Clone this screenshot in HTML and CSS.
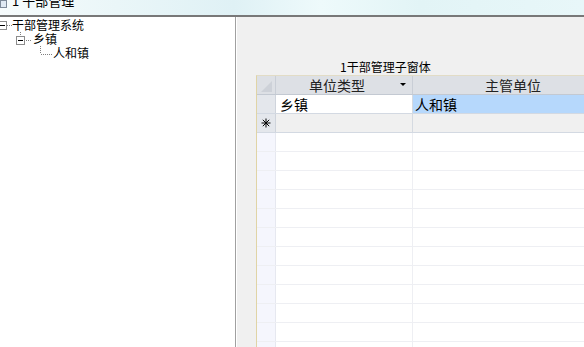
FILE: index.html
```html
<!DOCTYPE html>
<html lang="zh-CN">
<head>
    <meta charset="UTF-8">
    <meta name="viewport" content="width=device-width, initial-scale=1.0">
    <title>1 干部管理</title>
    <link rel="stylesheet" href="styles.css">
</head>
<body>

    <div class="titlebar">
        <span class="app-icon"></span>
        <span class="title">1 干部管理</span>
    </div>

    <div class="main">
        <!-- 左侧树 -->
        <div class="tree">
            <div class="node">
                <svg width="12" height="14">
                    <rect x="-1.5" y="3.5" width="8" height="8" fill="#fff" stroke="#8c8c8c"/>
                    <line x1="0" y1="7.5" x2="5" y2="7.5" stroke="#000"/>
                    <line x1="7" y1="7.5" x2="12" y2="7.5" stroke="#808080" stroke-dasharray="1 1"/>
                </svg>
                <span>干部管理系统</span>
            </div>
            <div class="node">
                <svg width="33" height="14">
                    <line x1="20.5" y1="0" x2="20.5" y2="4" stroke="#808080" stroke-dasharray="1 1"/>
                    <rect x="16.5" y="4.5" width="8" height="8" fill="#fff" stroke="#8c8c8c"/>
                    <line x1="18" y1="8.5" x2="23" y2="8.5" stroke="#000"/>
                    <line x1="26" y1="8.5" x2="32" y2="8.5" stroke="#808080" stroke-dasharray="1 1"/>
                </svg>
                <span>乡镇</span>
            </div>
            <div class="node">
                <svg width="53" height="14">
                    <line x1="40.5" y1="0" x2="40.5" y2="8" stroke="#808080" stroke-dasharray="1 1"/>
                    <line x1="41" y1="8.5" x2="52" y2="8.5" stroke="#808080" stroke-dasharray="1 1"/>
                </svg>
                <span>人和镇</span>
            </div>
        </div>

        <!-- 子窗体 -->
        <div class="form">
            <div class="sublabel">1干部管理子窗体</div>
            <div class="grid">
                <div class="row head">
                    <div class="cell sel">
                        <svg width="12" height="12"><polygon points="1,12 12,1 12,12" fill="#cdd1d8"/></svg>
                    </div>
                    <div class="cell c1">
                        <span class="head-text">单位类型</span>
                        <svg class="drop" width="6" height="4"><polygon points="0,0 6,0 3,3" fill="#000"/></svg>
                    </div>
                    <div class="cell c2"><span class="head-text">主管单位</span></div>
                </div>
                <div class="row rec">
                    <div class="cell sel"></div>
                    <div class="cell c1">乡镇</div>
                    <div class="cell c2 selected">人和镇</div>
                </div>
                <div class="row rec new">
                    <div class="cell sel">
                        <svg width="10" height="10">
                            <g stroke="#000" stroke-width="1">
                                <line x1="5" y1="0.5" x2="5" y2="9.5"/>
                                <line x1="0.5" y1="5" x2="9.5" y2="5"/>
                                <line x1="1.8" y1="1.8" x2="8.2" y2="8.2"/>
                                <line x1="8.2" y1="1.8" x2="1.8" y2="8.2"/>
                            </g>
                        </svg>
                    </div>
                    <div class="cell c1"></div>
                    <div class="cell c2"></div>
                </div>
                <div class="row empty"><div class="cell sel"></div><div class="cell c1"></div><div class="cell c2"></div></div>
                <div class="row empty"><div class="cell sel"></div><div class="cell c1"></div><div class="cell c2"></div></div>
                <div class="row empty"><div class="cell sel"></div><div class="cell c1"></div><div class="cell c2"></div></div>
                <div class="row empty"><div class="cell sel"></div><div class="cell c1"></div><div class="cell c2"></div></div>
                <div class="row empty"><div class="cell sel"></div><div class="cell c1"></div><div class="cell c2"></div></div>
                <div class="row empty"><div class="cell sel"></div><div class="cell c1"></div><div class="cell c2"></div></div>
                <div class="row empty"><div class="cell sel"></div><div class="cell c1"></div><div class="cell c2"></div></div>
                <div class="row empty"><div class="cell sel"></div><div class="cell c1"></div><div class="cell c2"></div></div>
                <div class="row empty"><div class="cell sel"></div><div class="cell c1"></div><div class="cell c2"></div></div>
                <div class="row empty"><div class="cell sel"></div><div class="cell c1"></div><div class="cell c2"></div></div>
                <div class="row empty"><div class="cell sel"></div><div class="cell c1"></div><div class="cell c2"></div></div>
                <div class="row empty"><div class="cell sel"></div><div class="cell c1"></div><div class="cell c2"></div></div>
            </div>
        </div>
    </div>

</body>
</html>
```

FILE: styles.css
```css
body {
    margin: 0;
    width: 584px;
    height: 347px;
    overflow: hidden;
    font-family: "Noto Sans CJK SC", sans-serif;
    font-size: 12px;
    color: #000;
    background-color: #f0f0f0;
}

/* 标题栏（上半部分被裁掉） */
.titlebar {
    display: flex;
    align-items: flex-start;
    height: 15px;
    overflow: hidden;
    border-bottom: 2px solid #787878;
    background: linear-gradient(90deg, #f6fbfc 0%, #eaf6f8 20%, #dff1f5 40%, #eefafb 55%, #e2f4f6 72%, #e8f7f9 100%);
}

.app-icon {
    width: 5px;
    height: 6px;
    border: 1px solid #7d8a99;
    background-color: #dfe9f3;
}

.title {
    margin-left: 5px;
    margin-top: -6px;
    line-height: 14px;
    font-size: 13px;
}

.main {
    display: flex;
    height: 330px;
}

/* 树形目录 */
.tree {
    width: 235px;
    flex: none;
    padding-top: 1px;
    border-right: 1px solid #a0a0a0;
    background-color: #fff;
}

.node {
    display: flex;
    height: 14px;
    line-height: 14px;
    white-space: nowrap;
}

.node svg {
    flex: none;
}

/* 右侧子窗体 */
.form {
    flex: 1;
    min-width: 0;
    overflow: hidden;
    border-left: 1px solid #fff;
}

.sublabel {
    margin: 43px 0 1px 103px;
    line-height: 14px;
}

.grid {
    width: 600px;
    height: 300px;
    margin-left: 19px;
    border-top: 1px solid #e2dcc6;
    border-left: 1px solid #e0d4a6;
    background-color: #fff;
    font-size: 14px;
}

.row {
    display: flex;
    height: 18px;
    line-height: 18px;
    border-bottom: 1px solid #eeeff3;
}

.cell {
    flex: none;
    height: 18px;
    white-space: nowrap;
}

.sel {
    width: 18px;
    border-right: 1px solid #e6e8f0;
    background-color: #f5f6fd;
    display: flex;
    align-items: center;
    justify-content: center;
}

.c1 {
    width: 132px;
    padding-left: 4px;
    border-right: 1px solid #eeeff3;
}

.c2 {
    width: 198px;
    padding-left: 2px;
}

/* 表头 */
.head {
    border-bottom-color: #c3c9d2;
    background-color: #dde0e5;
    color: #222;
}

.head .sel {
    background-color: #dde0e5;
    border-right-color: #c9ced6;
    align-items: flex-end;
    justify-content: flex-end;
    padding-bottom: 2px;
    height: 16px;
    width: 15px;
    padding-right: 3px;
}

.head .c1 {
    display: flex;
    align-items: center;
    padding-left: 0;
    width: 136px;
    border-right-color: #c9ced6;
}

.head .c1 .head-text {
    flex: 1;
    text-align: center;
    padding-left: 2px;
}

.head .c2 {
    width: 200px;
    padding-left: 0;
    text-align: center;
}

.drop {
    flex: none;
    margin: 0 6px 0 4px;
}

/* 记录行 */
.rec {
    border-bottom-color: #d3d9e2;
}

.rec .sel {
    background-color: #e4e7ec;
    border-right-color: #cfd4dc;
}

.rec .c1 {
    background-color: #fff;
    border-right-color: #d5dae1;
}

.selected {
    background-color: #b6d8fc;
}

.new .c1,
.new .c2 {
    background-color: #f0f0f0;
}
```
